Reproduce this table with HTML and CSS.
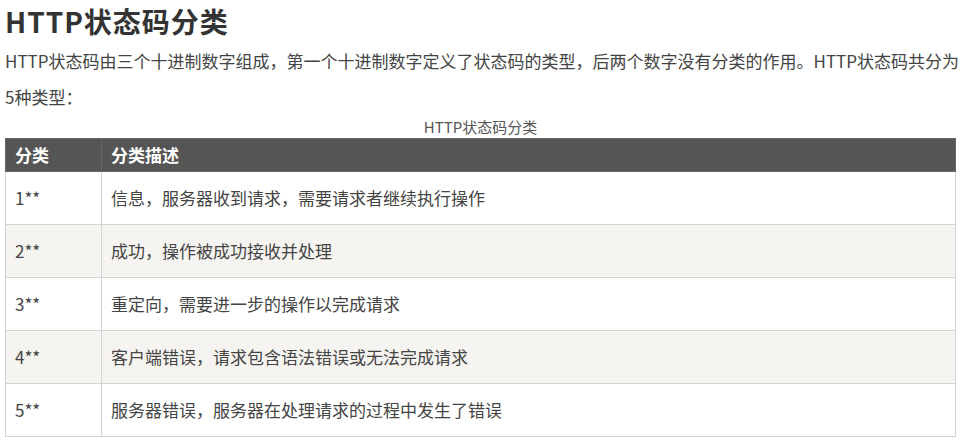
FILE: index.html
```html
<!DOCTYPE html>
<html lang="zh-CN">
<head>
<meta charset="utf-8">
<title>HTTP状态码分类</title>
<link rel="stylesheet" href="styles.css">
</head>
<body>
<div class="article">
  <h2 class="title">HTTP状态码分类</h2>
  <p class="intro">HTTP状态码由三个十进制数字组成，第一个十进制数字定义了状态码的类型，后两个数字没有分类的作用。HTTP状态码共分为5种类型：</p>
  <table class="status-table">
    <caption class="caption">HTTP状态码分类</caption>
    <thead>
      <tr><th class="col-code">分类</th><th>分类描述</th></tr>
    </thead>
    <tbody>
      <tr><td>1**</td><td>信息，服务器收到请求，需要请求者继续执行操作</td></tr>
      <tr><td>2**</td><td>成功，操作被成功接收并处理</td></tr>
      <tr><td>3**</td><td>重定向，需要进一步的操作以完成请求</td></tr>
      <tr><td>4**</td><td>客户端错误，请求包含语法错误或无法完成请求</td></tr>
      <tr><td>5**</td><td>服务器错误，服务器在处理请求的过程中发生了错误</td></tr>
    </tbody>
  </table>
</div>
</body>
</html>
```
FILE: styles.css
```css
html, body {
  margin: 0;
  padding: 0;
  background: #fff;
}
body {
  font-family: "Noto Sans CJK SC", "Noto Sans", sans-serif;
  color: #333;
}
.article {
  padding: 0 8px 0 5px;
}
.title {
  margin: 0;
  font-size: 28px;
  line-height: 43px;
  font-weight: bold;
  letter-spacing: 1px;
  color: #333;
}
.intro {
  margin: 0 -6px 0 0;
  font-size: 17px;
  line-height: 36px;
  color: #444;
}
.status-table {
  width: 100%;
  border-collapse: collapse;
  font-size: 17px;
}
.caption {
  font-size: 15px;
  line-height: 23px;
  color: #555;
  text-align: center;
}
.status-table th {
  background: #555;
  color: #fff;
  font-weight: bold;
  text-align: left;
  line-height: 26px;
  padding: 3px 9px;
  border: 1px solid #666;
}
.status-table td {
  line-height: 26px;
  padding: 13px 9px;
  border: 1px solid #d4d4d4;
  color: #444;
}
.status-table .col-code {
  width: 77px;
}
.status-table tbody tr:nth-child(even) td {
  background: #f6f4f0;
}
```
